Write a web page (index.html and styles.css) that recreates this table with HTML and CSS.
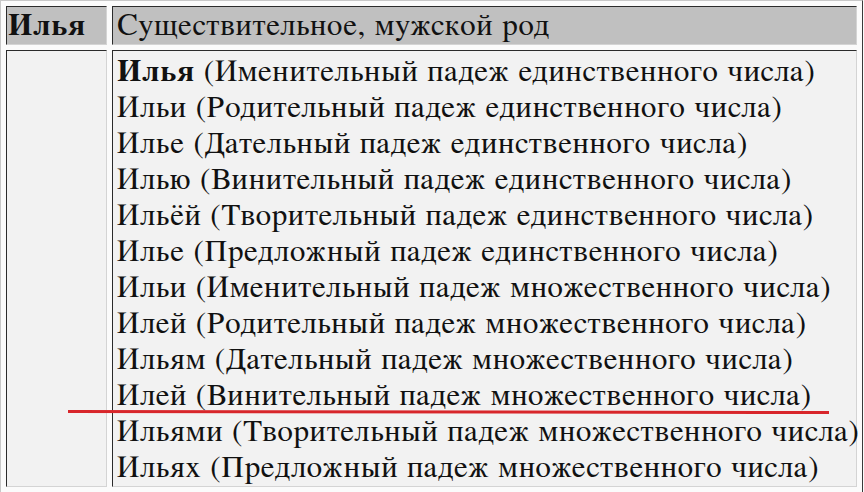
FILE: index.html
```html
<!DOCTYPE html>
<html lang="ru">
<head>
<meta charset="utf-8">
<title>Илья</title>
<link rel="stylesheet" href="styles.css">
</head>
<body>
<div class="wrap">
<table class="decl">
  <colgroup>
    <col class="c1">
    <col class="c2">
  </colgroup>
  <tr>
    <th class="head name">Илья</th>
    <td class="head">Существительное, мужской род</td>
  </tr>
  <tr>
    <td class="body"></td>
    <td class="body forms">
      <b>Илья</b> (Именительный падеж единственного числа)<br>
      Ильи (Родительный падеж единственного числа)<br>
      Илье (Дательный падеж единственного числа)<br>
      Илью (Винительный падеж единственного числа)<br>
      Ильёй (Творительный падеж единственного числа)<br>
      Илье (Предложный падеж единственного числа)<br>
      Ильи (Именительный падеж множественного числа)<br>
      Илей (Родительный падеж множественного числа)<br>
      Ильям (Дательный падеж множественного числа)<br>
      Илей (Винительный падеж множественного числа)<br>
      Ильями (Творительный падеж множественного числа)<br>
      Ильях (Предложный падеж множественного числа)
    </td>
  </tr>
</table>
<div class="mark"></div>
</div>
</body>
</html>
```

FILE: styles.css
```css
html, body {
  margin: 0;
  padding: 0;
  background: #fbfbfb;
}
.wrap {
  position: relative;
  width: 864px;
  height: 492px;
  overflow: hidden;
}
.decl {
  font-family: "FreeSerif", "Liberation Serif", serif;
  font-size: 31px;
  line-height: 36px;
  letter-spacing: 0.9px;
  color: #111;
  table-layout: fixed;
  border-collapse: separate;
  border-spacing: 5px;
  border: 1px solid;
  border-color: #c8c8c8 #3a3a3a #3a3a3a #c8c8c8;
  width: 863px;
  margin: 0;
}
.c1 { width: 101px; }
.decl th, .decl td {
  box-sizing: border-box;
  border: 1px solid;
  border-color: #2b2b2b #d4d4d4 #d4d4d4 #2b2b2b;
  text-align: left;
  font-weight: normal;
  white-space: nowrap;
  overflow: visible;
}
.head {
  background: #c0c0c0;
  padding: 1px 2px 0 4px;
}
.decl th.name {
  font-weight: bold;
  padding: 1px 2px 0 1px;
}
.body {
  background: #f2f2f2;
  padding: 3px 2px 0 4px;
  vertical-align: top;
}
.forms b {
  font-weight: bold;
}
.mark {
  position: absolute;
  left: 68px;
  top: 410px;
  width: 761px;
  height: 3px;
  background: #d8262b;
  transform: rotate(0.08deg);
  transform-origin: left center;
}
```
